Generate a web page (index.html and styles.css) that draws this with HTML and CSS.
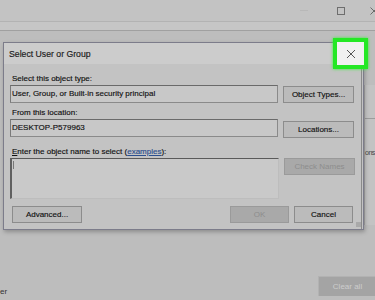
FILE: index.html
```html
<!DOCTYPE html>
<html lang="en">
<head>
    <meta charset="UTF-8">
    <meta name="viewport" content="width=device-width, initial-scale=1.0">
    <title>Select User or Group</title>
    <link rel="stylesheet" href="styles.css">
</head>
<body>
    <div class="window">
        <div class="titlebar">
            <span class="ctl ctl-min"></span>
            <span class="ctl ctl-max"></span>
            <svg class="ctl ctl-close" width="5" height="8" viewBox="0 0 5 8">
                <path d="M0.5 0.5 L7.5 7.5 M7.5 0.5 L0.5 7.5" stroke="#6a6a6a" stroke-width="1" fill="none"/>
            </svg>
        </div>
        <div class="toolbar"></div>

        <div class="page">
            <div class="page-main"></div>
            <div class="page-side">
                <div class="side-row"></div>
                <div class="side-text">ons</div>
            </div>
        </div>

        <div class="page-footer">
            <span class="footer-label">er</span>
            <div class="clear-btn">Clear all</div>
        </div>

        <div class="dialog">
            <div class="dialog-title">
                <span>Select User or Group</span>
            </div>
            <div class="dialog-body">
                <div class="label">Select this object type:</div>
                <div class="row row-type">
                    <div class="field">User, Group, or Built-in security principal</div>
                    <div class="btn btn-low">Object Types...</div>
                </div>

                <div class="label">From this location:</div>
                <div class="row row-location">
                    <div class="field">DESKTOP-P579963</div>
                    <div class="btn btn-lower">Locations...</div>
                </div>

                <div class="label"><u>E</u>nter the object name to select (<a href="#">examples</a>):</div>
                <div class="row row-names">
                    <div class="textarea"><span class="caret"></span></div>
                    <div class="btn btn-disabled">Check Names</div>
                </div>

                <div class="dialog-footer">
                    <div class="btn btn-adv">Advanced...</div>
                    <div class="footer-right">
                        <div class="btn btn-ok btn-disabled">OK</div>
                        <div class="btn btn-ok">Cancel</div>
                    </div>
                </div>
            </div>
            <div class="grip"></div>
        </div>

        <div class="close-highlight">
            <svg class="close-x" width="10" height="10" viewBox="0 0 10 10">
                <path d="M1 1 L9 9 M9 1 L1 9" stroke="#444" stroke-width="0.9" fill="none"/>
            </svg>
        </div>
    </div>
</body>
</html>
```

FILE: styles.css
```css
body {
    margin: 0;
    padding: 0;
    background: #bdbdbd;
    font-family: "Liberation Sans", Arial, sans-serif;
    color: #111;
}
.window {
    position: relative;
    width: 375px;
    height: 300px;
    overflow: hidden;
    display: flex;
    flex-direction: column;
}
.titlebar {
    height: 21px;
    background: #c3c3c3;
    border-bottom: 1px solid #b3b3b3;
    display: flex;
    align-items: center;
    justify-content: flex-end;
}
.ctl {
    display: block;
}
.ctl-min {
    width: 8px;
    height: 1px;
    background: #b8b8b8;
    margin-right: 29px;
}
.ctl-max {
    width: 6px;
    height: 6px;
    border: 1px solid #6e6e6e;
    margin-right: 25px;
}
.toolbar {
    height: 8px;
    background: #c6c6c6;
    border-bottom: 1px solid #a0a0a0;
}
.page {
    flex: 1;
    display: flex;
}
.page-main {
    flex: 1;
}
.page-side {
    width: 10px;
    margin-top: 54px;
    height: 140px;
    background: #c3c3c3;
    border-left: 1px solid #a8a8a8;
}
.side-row {
    height: 33px;
    border-bottom: 1px solid #9c9c9c;
}
.side-text {
    margin-top: 30px;
    font-size: 7px;
    letter-spacing: -0.5px;
    color: #444;
    white-space: nowrap;
}
.page-footer {
    height: 24px;
    display: flex;
    align-items: flex-start;
    justify-content: space-between;
}
.footer-label {
    font-size: 8px;
    color: #333;
    margin-top: 11px;
}
.clear-btn {
    width: 57px;
    height: 19px;
    background: #a4a4a4;
    border-top: 1px solid #b2b2b2;
    border-left: 1px solid #b2b2b2;
    color: #cdcdcd;
    font-size: 8px;
    display: flex;
    align-items: center;
    justify-content: center;
    margin-right: -1px;
}

/* dialog sits over the page */
.dialog {
    position: absolute;
    left: 3px;
    top: 42px;
    width: 359px;
    height: 186px;
    border: 1px solid #7c7c8a;
    background: #c3c3c3;
    box-shadow: 1px 2px 4px rgba(0, 0, 0, 0.25);
    display: flex;
    flex-direction: column;
}
.dialog-title {
    height: 21px;
    background: #cccccc;
    display: flex;
    align-items: center;
    padding-left: 5px;
    font-size: 8.7px;
    color: #1a1a1a;
    -webkit-text-stroke: 0.15px #1a1a1a;
}
.dialog-body {
    flex: 1;
    padding: 9px 0 0 6px;
    border-right: 1px solid #8a8a8a;
    margin-right: 1px;
}
.label {
    font-size: 8px;
    padding-left: 2px;
    height: 11px;
    line-height: 11px;
    -webkit-text-stroke: 0.15px #111;
}
.label a {
    color: #2b4f8e;
    -webkit-text-stroke: 0.15px #2b4f8e;
}
.row {
    display: flex;
    gap: 5px;
    align-items: flex-start;
    margin-top: 1px;
}
.row-type {
    margin-bottom: 4px;
}
.row-location {
    margin-bottom: 8px;
}
.row-names {
    margin-bottom: 8px;
}
.field {
    width: 265px;
    height: 16px;
    border: 1px solid #8a8a8a;
    border-top-color: #6a6a6a;
    border-left-color: #7a7a7a;
    background: #c8c8c8;
    font-size: 8px;
    line-height: 16px;
    padding-left: 1px;
    white-space: nowrap;
    -webkit-text-stroke: 0.15px #111;
}
.textarea {
    width: 266px;
    height: 39px;
    border-top: 1px solid #5a5a5a;
    border-left: 2px solid #606060;
    border-right: 1px solid #bdbdbd;
    border-bottom: 1px solid #bdbdbd;
    background: #c9c9c9;
}
.caret {
    display: block;
    width: 1px;
    height: 8px;
    margin: 2px 0 0 1px;
    background: #777;
}
.btn {
    width: 69px;
    height: 15px;
    border: 1px solid #8c8c8c;
    background: #bbbbbb;
    font-size: 8px;
    color: #111;
    -webkit-text-stroke: 0.15px #111;
    display: flex;
    align-items: center;
    justify-content: center;
}
.btn-low {
    margin-top: 1px;
}
.btn-lower {
    margin-top: 2px;
}
.btn-disabled {
    background: #a9a9a9;
    border-color: #9a9a9a;
    color: #8d8d8d;
    -webkit-text-stroke: 0;
}
.dialog-footer {
    display: flex;
    justify-content: space-between;
    margin-top: -1px;
    padding: 0 8px 0 2px;
}
.footer-right {
    display: flex;
    gap: 5px;
}
.btn-ok {
    width: 57px;
}
.btn-adv {
    width: 68px;
}
.grip {
    position: absolute;
    right: 2px;
    bottom: 2px;
    width: 5px;
    height: 5px;
    background: radial-gradient(circle, #8a8a8a 0.6px, transparent 0.8px) 0 0 / 2px 2px;
}

/* green highlight over the dialog close button */
.close-highlight {
    position: absolute;
    left: 333px;
    top: 38px;
    width: 27px;
    height: 23px;
    border: 4px solid #25e825;
    box-shadow: 0 0 3px #3af03a;
    background: #f1f1f1;
    display: flex;
    align-items: center;
    justify-content: center;
}
```
